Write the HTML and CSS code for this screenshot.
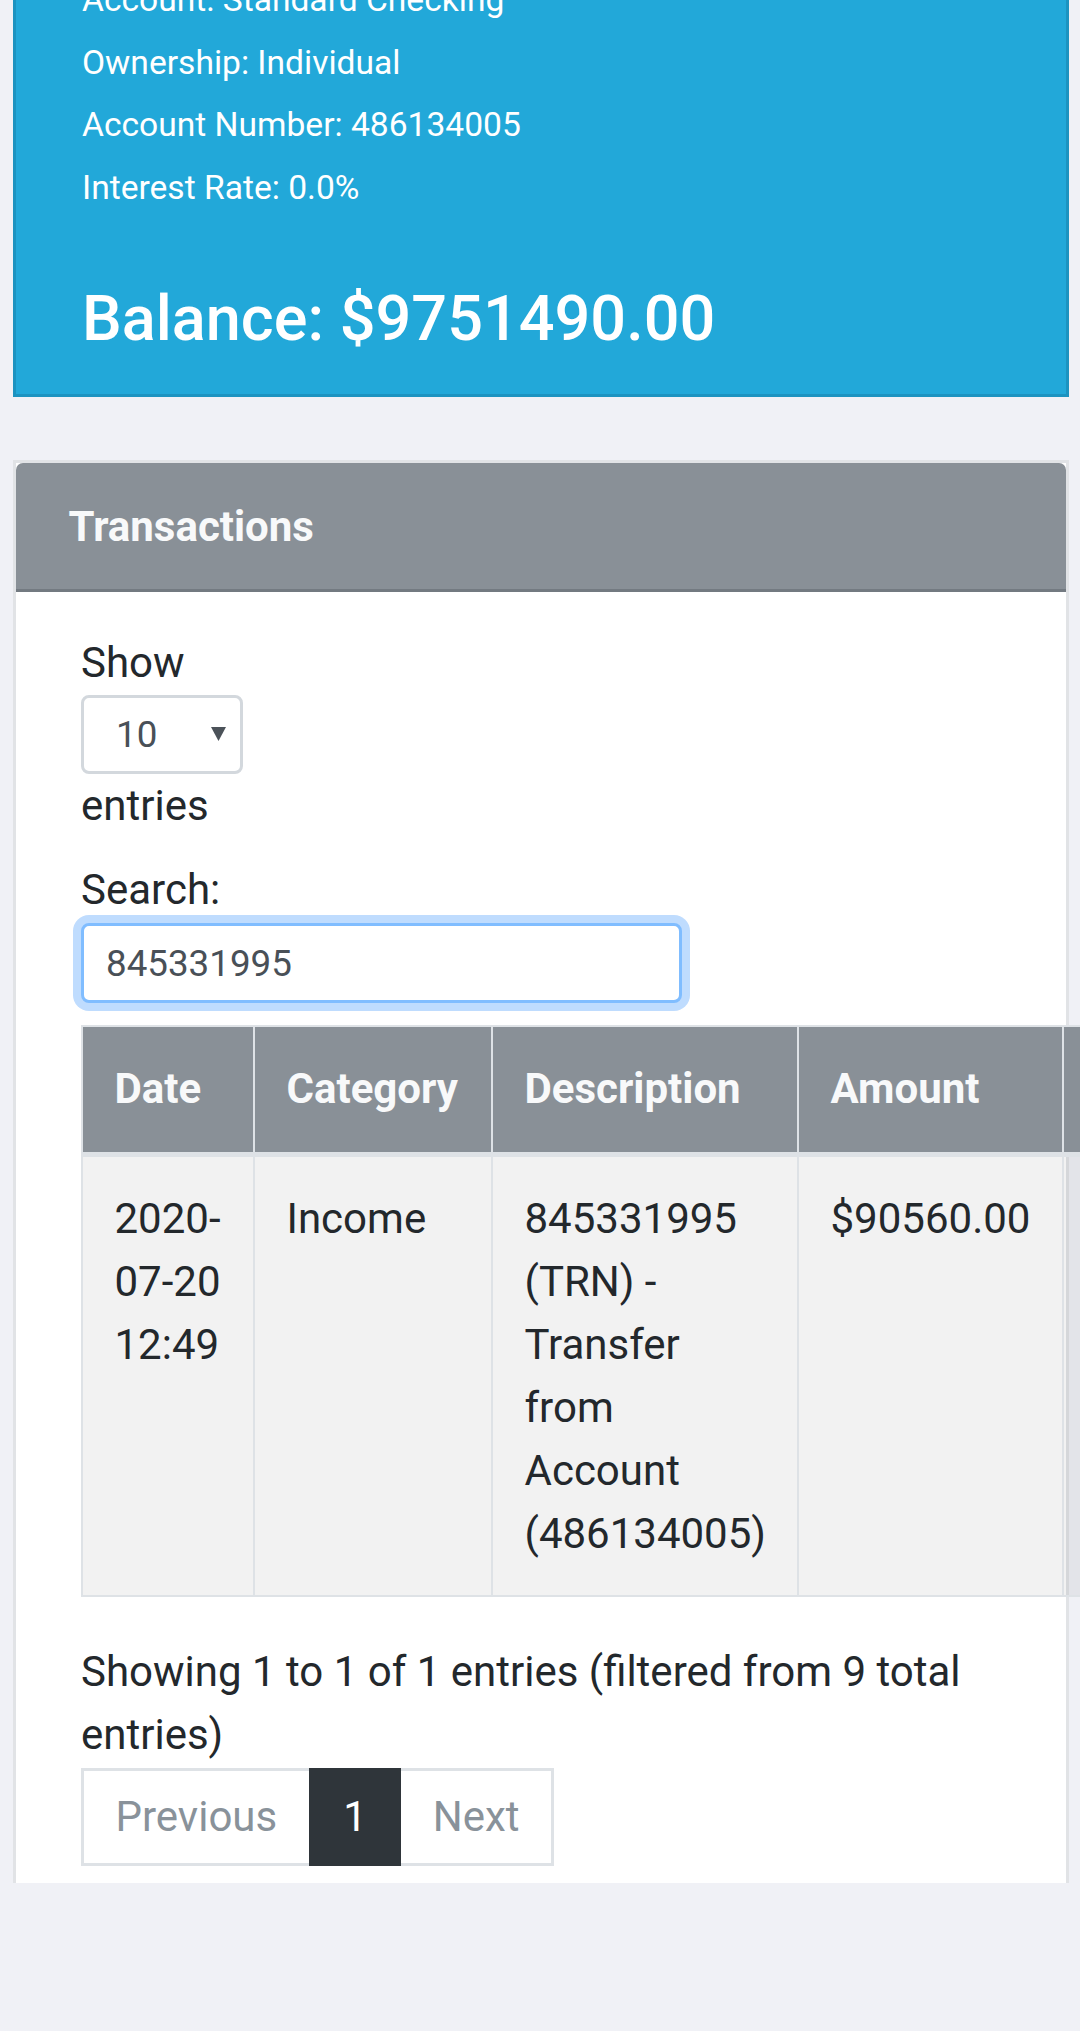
FILE: index.html
```html
<!DOCTYPE html>
<html lang="en">
<head>
<meta charset="utf-8">
<title>Account</title>
<link rel="stylesheet" href="styles.css">
</head>
<body>
<div class="page">
  <section class="info-card">
    <div class="info-line">Account: Standard Checking</div>
    <div class="info-line">Ownership: Individual</div>
    <div class="info-line">Account Number: 486134005</div>
    <div class="info-line">Interest Rate: 0.0%</div>
    <h4 class="balance">Balance: $9751490.00</h4>
  </section>

  <section class="tx-card">
    <header class="tx-header">Transactions</header>
    <div class="tx-body">
      <div class="length">
        <div class="lbl">Show</div>
        <div class="select">
          <span class="select-value">10</span>
          <svg class="select-arrow" width="15" height="14" viewBox="0 0 15 14"><path d="M0 0 H15 L7.5 14 Z" fill="#4b5259"/></svg>
        </div>
        <div class="lbl">entries</div>
      </div>
      <div class="filter">
        <div class="lbl">Search:</div>
        <input class="search" type="search" value="845331995">
      </div>

      <table class="tx-table">
        <thead>
          <tr>
            <th class="c-date">Date</th>
            <th class="c-cat">Category</th>
            <th class="c-desc">Description</th>
            <th class="c-amt">Amount</th>
            <th class="c-extra"></th>
          </tr>
        </thead>
        <tbody>
          <tr>
            <td>2020-07-20 12:49</td>
            <td>Income</td>
            <td>845331995 (TRN) - Transfer from Account (486134005)</td>
            <td>$90560.00</td>
            <td></td>
          </tr>
        </tbody>
      </table>

      <div class="info">Showing 1 to 1 of 1 entries (filtered from 9 total entries)</div>
      <ul class="pagination">
        <li class="page-item disabled"><span class="page-link">Previous</span></li>
        <li class="page-item active"><span class="page-link">1</span></li>
        <li class="page-item disabled next"><span class="page-link">Next</span></li>
      </ul>
    </div>
  </section>
</div>
</body>
</html>
```

FILE: styles.css
```css
html, body {
  margin: 0;
  padding: 0;
  background: #f0f1f6;
}
body {
  overflow-x: hidden;
  font-family: Roboto, "Noto Sans", "Liberation Sans", sans-serif;
  font-size: 42px;
  line-height: 63px;
  color: #23282c;
  min-height: 2031px;
}
.page {
  margin-top: -86px;
  padding: 0 11px 0 13px;
}

/* Account info card */
.info-card {
  background: #22a8d9;
  border: 3px solid #1c93c0;
  padding: 52px 63px 38px 66px;
  color: #ffffff;
}
.info-line {
  font-size: 33.6px;
  line-height: 62.7px;
}
.balance {
  margin: 61px 0 0;
  font-size: 63px;
  font-weight: 500;
  line-height: 75.6px;
}

/* Transactions card */
.tx-card {
  margin-top: 63px;
  background: #ffffff;
  border: 3px solid #e1e3e6;
  border-bottom: 0;
}
.tx-header {
  background: #899097;
  color: #f8f9fa;
  font-weight: 700;
  font-size: 42px;
  line-height: 63px;
  padding: 31.5px 52.5px;
  border-bottom: 3px solid #737a81;
  border-radius: 7px 7px 0 0;
}
.tx-body {
  padding: 39px 65px 19px;
}
.lbl {
  line-height: 63px;
}
.select {
  box-sizing: border-box;
  width: 162px;
  height: 79px;
  margin-top: 1px;
  border: 3px solid #d3d8dd;
  border-radius: 8px;
  display: flex;
  align-items: center;
  justify-content: space-between;
  padding: 0 14px 0 32px;
  font-size: 36.75px;
  color: #495057;
}
.select-arrow {
  display: block;
  margin-top: -2px;
}
.filter {
  margin-top: 21px;
}
.search {
  display: block;
  box-sizing: border-box;
  width: 601px;
  height: 80px;
  margin: 2px 0 0;
  padding: 0 22px;
  border: 3px solid #80bdff;
  border-radius: 8px;
  box-shadow: 0 0 0 8px #bfdcfe;
  outline: none;
  background: #ffffff;
  font-family: Roboto, "Noto Sans", "Liberation Sans", sans-serif;
  font-size: 36.75px;
  color: #495057;
}

/* Table */
.tx-table {
  margin-top: 21.6px;
  table-layout: fixed;
  width: 1241px;
  border-collapse: separate;
  border-spacing: 0;
}
.tx-table th,
.tx-table td {
  box-sizing: border-box;
  border-left: 2px solid #dee2e6;
  border-top: 2px solid #dee2e6;
  padding: 30px 31.5px 32px;
  text-align: left;
  vertical-align: top;
  font-size: 42px;
  line-height: 63px;
}
.tx-table thead th {
  background: #899097;
  color: #f8f9fa;
  font-weight: 700;
  border-bottom: 5px solid #dee2e6;
}
.tx-table tbody td {
  background: rgba(0, 0, 0, 0.05);
  border-top: 0;
  border-bottom: 2px solid #dee2e6;
  padding: 29.5px 31.5px 30px;
}
.c-date { width: 172px; }
.c-cat { width: 238px; }
.c-desc { width: 306px; }
.c-amt { width: 265px; }
.c-extra { width: 260px; }

/* Footer */
.info {
  margin-top: 43px;
  line-height: 63px;
}
.pagination {
  display: flex;
  list-style: none;
  margin: 2px 0 0;
  padding: 0;
}
.page-link {
  display: block;
  padding: 20px 31.5px;
  line-height: 52.5px;
  font-size: 42px;
  border: 3px solid #dee2e6;
  background: #ffffff;
  color: #89929a;
}
.page-item.next,
.page-item.active {
  margin-left: -3px;
}
.page-item.active {
  position: relative;
  z-index: 2;
}
.page-item.active .page-link {
  background: #2f353a;
  border-color: #2f353a;
  color: #ffffff;
}
.tx-body {
  padding-bottom: 17px;
}
```
